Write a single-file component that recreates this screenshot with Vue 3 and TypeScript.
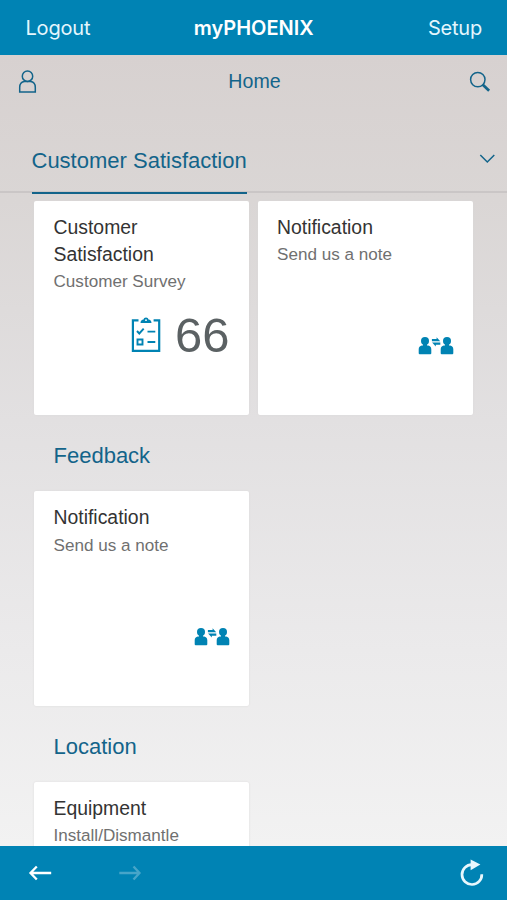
<script setup lang="ts">
interface Tile {
  title: string
  subtitle: string
  icon?: 'survey' | 'people'
  value?: number
}

interface Group {
  title: string
  anchored: boolean
  tiles: Tile[]
}

const groups: Group[] = [
  {
    title: 'Customer Satisfaction',
    anchored: true,
    tiles: [
      { title: 'Customer Satisfaction', subtitle: 'Customer Survey', icon: 'survey', value: 66 },
      { title: 'Notification', subtitle: 'Send us a note', icon: 'people' },
    ],
  },
  {
    title: 'Feedback',
    anchored: false,
    tiles: [{ title: 'Notification', subtitle: 'Send us a note', icon: 'people' }],
  },
  {
    title: 'Location',
    anchored: false,
    tiles: [{ title: 'Equipment', subtitle: 'Install/Dismantle' }],
  },
]
</script>

<template>
  <div class="app">
    <header class="titlebar">
      <span class="action">Logout</span>
      <span class="brand">myPHOENIX</span>
      <span class="action end">Setup</span>
    </header>

    <div class="top">
      <div class="shell">
        <svg class="user" width="19" height="24" viewBox="0 0 19 24">
          <circle cx="9.5" cy="6.200" r="5.200" />
          <path d="M1.700 22V17.500C1.700 14.200 3.600 11.700 6.500 11.500h6c2.900.2 4.800 2.700 4.800 6V22z" />
        </svg>
        <span class="page-title">Home</span>
        <svg class="search" width="22" height="22" viewBox="0 0 22 22">
          <circle cx="8.800" cy="8.600" r="7.200" />
          <path class="handle" d="M13.600 13.600l6.500 6.200" />
        </svg>
      </div>
      <nav class="anchors">
        <span class="anchor">{{ groups[0].title }}</span>
        <svg class="chevron" width="16" height="10" viewBox="0 0 16 10">
          <path d="M1.300 1L8.300 8L15.300 1" />
        </svg>
      </nav>
    </div>

    <main class="content">
      <section v-for="group in groups" :key="group.title" class="group">
        <h2 v-if="!group.anchored" class="group-title">{{ group.title }}</h2>
        <div class="tiles">
          <article v-for="tile in group.tiles" :key="tile.title" class="tile">
            <h3 class="tile-title">{{ tile.title }}</h3>
            <p class="tile-sub">{{ tile.subtitle }}</p>
            <div v-if="tile.icon" class="figure" :class="tile.icon">
              <svg v-if="tile.icon === 'survey'" width="30" height="36" viewBox="0 0 30 36">
                <path class="line" d="M7.500 3.400H1.900v30.400h26.300V3.400h-5.600" />
                <path class="solid" d="M9.500 6c0-2.200 1.300-3.300 3-3.500C12.700 1.200 13.700.5 15 .5s2.300.7 2.500 2c1.700.2 3 1.300 3 3.500z" />
                <circle cx="15" cy="3.200" r=".9" fill="#fff" />
                <path class="line thin" d="M6 14l2.300 2.500 4.400-4.800M16.500 14.600h7.800M16.500 25h7.800M6.500 22.500h5v5h-5z" />
              </svg>
              <svg v-else width="36" height="20" viewBox="0 0 36 20">
                <g class="solid">
                  <circle cx="7" cy="5" r="4" />
                  <path d="M5 7.500h4v2.100h1.200c1.900.3 3.100 1.700 3.100 3.700v4q0 1-1 1H1.700q-1 0-1-1v-4c0-2 1.200-3.400 3.100-3.700H5z" />
                  <circle cx="29" cy="5" r="4" />
                  <path d="M27 7.500h4v2.100h1.200c1.900.3 3.100 1.700 3.100 3.700v4q0 1-1 1H23.700q-1 0-1-1v-4c0-2 1.200-3.400 3.100-3.700H27z" />
                  <path d="M13.900 2.900h4.700V1.300l3.600 3.900h-8.300zM22.300 6.600h-8.200l3.700 3.800V8.700h4.500z" />
                </g>
              </svg>
              <span v-if="tile.value !== undefined" class="value">{{ tile.value }}</span>
            </div>
          </article>
        </div>
      </section>
    </main>

    <footer class="toolbar">
      <svg width="24" height="16" viewBox="0 0 24 16">
        <path d="M8.800 1.500L2.500 8l6.300 6.500M2.500 8H23.200" />
      </svg>
      <svg class="disabled" width="24" height="16" viewBox="0 0 24 16">
        <path d="M15.500 1.500l6 6.500-6 6.500M21.500 8H1.300" />
      </svg>
      <svg class="reload" width="26" height="28" viewBox="0 0 26 28">
        <path d="M22.800 15.200A9.900 9.900 0 1 1 12.900 5.700" />
        <path class="head" d="M11.600.4L21.400 5.500 11.600 11.200z" />
      </svg>
    </footer>
  </div>
</template>

<style>
body {
  margin: 0;
  overflow: hidden;
}
</style>

<style scoped>
.app {
  display: flex;
  flex-direction: column;
  box-sizing: border-box;
  width: 507px;
  height: 900px;
  overflow: hidden;
  font-family: "Liberation Sans", Arial, sans-serif;
  color: #13648a;
  background: linear-gradient(#d7d1d0 55px, #dad6d5 200px, #e2e0e1 420px, #ebeaeb 650px, #f2f2f2 846px);
}

.titlebar {
  flex: none;
  display: grid;
  grid-template-columns: 1fr auto 1fr;
  align-items: center;
  box-sizing: border-box;
  height: 55px;
  padding: 0 25px 0 25.500px;
  background: #0083b4;
  color: #e4f6fd;
  font-family: Inter, "Liberation Sans", sans-serif;
  font-size: 20px;
}

.action {
  letter-spacing: -.2px;
}

.brand {
  color: #fff;
  font-weight: 600;
}

.end {
  text-align: right;
}

.top {
  flex: none;
  height: 136px;
  border-bottom: 2px solid #cac6c6;
}

.shell {
  display: grid;
  grid-template-columns: 1fr auto 1fr;
  align-items: center;
  height: 53px;
  padding: 0 16px 0 18px;
}

.shell svg,
.chevron {
  fill: none;
  stroke: #13648a;
  stroke-width: 1.500;
}

.search {
  justify-self: end;
}

.shell .handle {
  stroke-width: 2.800;
}

.page-title {
  font-size: 19.600px;
}

.anchors {
  display: flex;
  align-items: flex-start;
  justify-content: space-between;
  height: 85px;
  padding: 0 12px 0 31.500px;
}

.anchor {
  box-sizing: border-box;
  height: 86px;
  padding-top: 40px;
  border-bottom: 2px solid #13648a;
  font-size: 22px;
  line-height: 26px;
}

.chevron {
  margin-top: 46px;
}

.content {
  flex: 1;
  min-height: 0;
  overflow: hidden;
  padding: 7.500px 34px 0;
}

.group-title {
  margin: 0;
  padding: 26px 0 21px 19.500px;
  font-size: 22px;
  font-weight: 400;
  line-height: 29px;
}

.tiles {
  display: flex;
  gap: 8.500px;
}

.tile {
  display: flex;
  flex-direction: column;
  box-sizing: border-box;
  width: 215px;
  height: 214.700px;
  padding: 13.300px 19.500px 0;
  border-radius: 2px;
  background: #fff;
  box-shadow: 0 0 2px #d9d7d7;
}

.tile-title {
  margin: 0;
  color: #333;
  font-size: 19.400px;
  font-weight: 400;
  line-height: 27px;
}

.tile-sub {
  margin: 2.200px 0 0;
  color: #707070;
  font-size: 17.100px;
  line-height: 24px;
}

.figure {
  display: flex;
  align-items: center;
  justify-content: flex-end;
  height: 60px;
  margin-top: auto;
  margin-bottom: 50.500px;
}

.people {
  margin-right: -.5px;
  margin-bottom: 39px;
}

.solid {
  fill: #0083b3;
}

.line {
  fill: none;
  stroke: #0083b3;
  stroke-width: 2.200;
}

.thin {
  stroke-width: 1.900;
}

.value {
  margin-left: 14px;
  color: #5b6163;
  font-size: 49px;
  line-height: 60px;
}

.toolbar {
  flex: none;
  display: flex;
  align-items: center;
  box-sizing: border-box;
  height: 54px;
  padding: 0 22px 0 28px;
  background: #0083b4;
}

.toolbar svg {
  fill: none;
  stroke: #fff;
  stroke-width: 2.300;
}

.toolbar .disabled {
  margin-left: 66px;
  opacity: .28;
}

.toolbar .reload {
  margin-left: auto;
  stroke: #e8f7fd;
  stroke-width: 2.700;
}

.toolbar .reload .head {
  fill: #e8f7fd;
  stroke: none;
}
</style>
